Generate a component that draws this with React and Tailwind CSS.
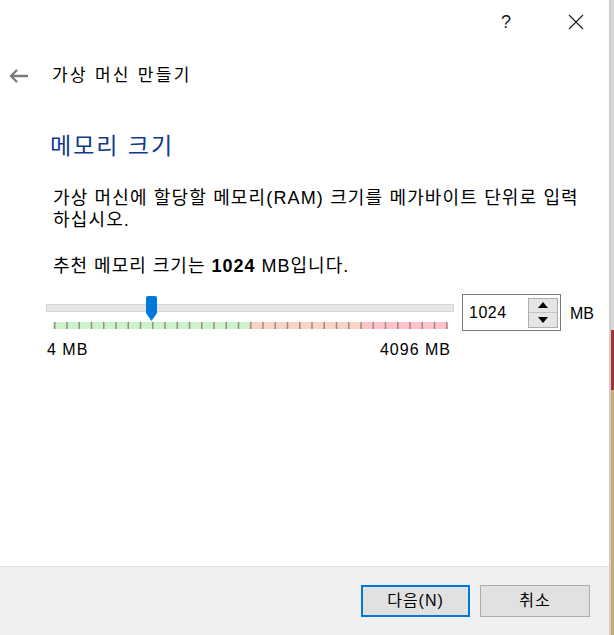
const font = { fontFamily: "'Liberation Sans', 'Noto Sans CJK KR', sans-serif" };

function TickBand() {
  const ticks = [];
  for (let i = 0; i <= 32; i++) ticks.push(1 + i * 12.25);
  return (
    <svg width="395" height="7" className="block">
      <rect x="0" y="0" width="196" height="7" fill="#c9f3c9" />
      <rect x="196" y="0" width="113" height="7" fill="#f9d3c3" />
      <rect x="309" y="0" width="86" height="7" fill="#ffc3cb" />
      {ticks.map((x) => (
        <rect key={x} x={x} y="0" width="1.5" height="7" fill="#9a8c84" />
      ))}
    </svg>
  );
}

function Handle() {
  return (
    <svg width="13" height="26" className="absolute left-[98px] top-[-9px]">
      <path d="M1 2 Q1 0 3 0 L10 0 Q12 0 12 2 L12 17 L6.5 25 L1 17 Z" fill="#0078d7" />
    </svg>
  );
}

export default function App() {
  return (
    <div className="flex w-[614px] h-[635px] bg-white text-black" style={font}>
      <div className="flex flex-col w-[611px] h-full border-r-2 border-[#cfcfcf]">
        <div className="flex justify-end items-center h-[44px] pr-[25px] gap-[57px] text-[#1a1a1a]">
          <span className="text-[18px]">?</span>
          <svg width="16" height="16" viewBox="0 0 16 16">
            <path d="M1 1 L15 15 M15 1 L1 15" stroke="#1a1a1a" strokeWidth="1.1" />
          </svg>
        </div>
        <div className="flex items-center h-[64px] pl-[9px]">
          <svg width="20" height="14" viewBox="0 0 20 14">
            <path d="M2 7 H19 M8 1 L2 7 L8 13" stroke="#7b7b7b" strokeWidth="2.4" fill="none" />
          </svg>
          <span className="ml-[23px] text-[17px] tracking-[2.3px]">가상 머신 만들기</span>
        </div>
        <div className="pl-[50px] pt-[23px]">
          <h1 className="text-[23px] text-[#103a8c] tracking-[2px] leading-[30px]">메모리 크기</h1>
          <p className="mt-[26px] ml-[3px] text-[18px] leading-[22px] tracking-[1.15px]">
            가상 머신에 할당할 메모리(RAM) 크기를 메가바이트 단위로 입력
            <br />
            하십시오.
          </p>
          <p className="mt-[24px] ml-[3px] text-[18px] leading-[22px] tracking-[1px]">
            추천 메모리 크기는 <b>1024</b> MB입니다.
          </p>
        </div>
        <div className="flex items-start pl-[46px] mt-[17px]">
          <div className="flex flex-col w-[408px] pt-[10px]">
            <div className="relative h-[8px] bg-[#e7e7e7] border border-[#d6d6d6]">
              <Handle />
            </div>
            <div className="pl-[7px] mt-[10px]">
              <TickBand />
            </div>
            <div className="flex justify-between mt-[12px] pl-[1px] pr-[3px] text-[16px] leading-[18px] tracking-[1px]">
              <span>4 MB</span>
              <span>4096 MB</span>
            </div>
          </div>
          <div className="flex items-center ml-[8px] w-[99px] h-[37px] border border-[#7a7a7a] pl-[6px] pr-[2px]">
            <span className="flex-1 text-[16px] tracking-[0.5px]">1024</span>
            <div className="flex flex-col w-[30px] h-[30px] border border-[#adadad] bg-[#e5e5e5]">
              <div className="flex flex-1 items-center justify-center border-b border-[#c4c4c4]">
                <svg width="10" height="6"><path d="M0 6 L5 0 L10 6 Z" fill="#000" /></svg>
              </div>
              <div className="flex flex-1 items-center justify-center">
                <svg width="10" height="6"><path d="M0 0 L5 6 L10 0 Z" fill="#000" /></svg>
              </div>
            </div>
          </div>
          <span className="ml-[9px] mt-[8px] text-[16px]">MB</span>
        </div>
        <div className="flex-1" />
        <div className="flex justify-end gap-[10px] h-[69px] pt-[18px] pr-[19px] bg-[#f0f0f0] border-t border-[#dfdfdf]">
          <button className="w-[109px] h-[32px] border-2 border-[#0078d7] bg-[#e1e1e1] text-[16px] tracking-[1px]">다음(N)</button>
          <button className="w-[110px] h-[32px] border border-[#adadad] bg-[#e1e1e1] text-[16px] tracking-[1px]">취소</button>
        </div>
      </div>
      <div className="flex flex-col w-[3px]">
        <div className="h-[330px] bg-[#d8d8d8]" />
        <div className="h-[60px] bg-[#a83232]" />
        <div className="flex-1 bg-[#c9aa72]" />
      </div>
    </div>
  );
}
